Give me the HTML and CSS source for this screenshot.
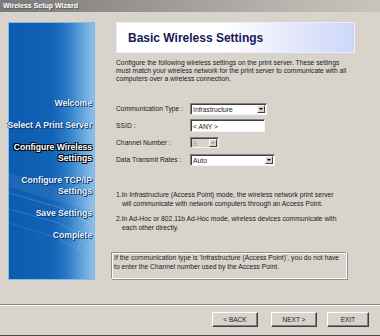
FILE: index.html
```html
<!DOCTYPE html>
<html lang="en">
<head>
    <meta charset="UTF-8">
    <title>Wireless Setup Wizard</title>
    <link rel="stylesheet" href="styles.css">
</head>
<body>
    <div class="window">
        <div class="titlebar">Wireless Setup Wizard</div>

        <div class="content">
            <aside class="steps">
                <svg class="steps-art" width="87" height="258" viewBox="0 0 87 258">
                    <polygon points="0,150 60,168 87,176 87,188 40,176 0,164" fill="#ffffff" fill-opacity="0.07"/>
                    <polyline points="0,170 55,186 80,200 70,212" fill="none" stroke="#ffffff" stroke-opacity="0.18"/>
                    <polyline points="0,186 50,200 75,214 68,226" fill="none" stroke="#ffffff" stroke-opacity="0.15"/>
                    <polyline points="0,200 46,214 72,228" fill="none" stroke="#ffffff" stroke-opacity="0.12"/>
                </svg>
                <ul class="step-list">
                    <li>Welcome</li>
                    <li>Select A Print Server</li>
                    <li class="current">Configure Wireless<br>Settings</li>
                    <li>Configure TCP/IP<br>Settings</li>
                    <li>Save Settings</li>
                    <li>Complete</li>
                </ul>
            </aside>

            <main class="page">
                <div class="page-head">
                    <h1>Basic Wireless Settings</h1>
                </div>

                <p class="intro">Configure the following wireless settings on the print server. These settings<br>must match your wireless network for the print server to communicate with all<br>computers over a wireless connection.</p>

                <div class="form">
                    <label>Communication Type :</label>
                    <div class="control combo comm"><span>Infrastructure</span><i class="arrow"></i></div>

                    <label>SSID :</label>
                    <div class="control text ssid"><span>&lt; ANY &gt;</span></div>

                    <label>Channel Number :</label>
                    <div class="control combo channel disabled"><span>9</span><i class="arrow"></i></div>

                    <label>Data Transmit Rates :</label>
                    <div class="control combo rate"><span>Auto</span><i class="arrow"></i></div>
                </div>

                <ol class="notes">
                    <li>1.In Infrastructure (Access Point) mode, the wireless network print server<br>will communicate with network computers through an Access Point.</li>
                    <li>2.In Ad-Hoc or 802.11b Ad-Hoc mode, wireless devices communicate with<br>each other directly.</li>
                </ol>

                <div class="hint">If the communication type is 'Infrastructure (Access Point)', you do not have<br>to enter the Channel number used by the Access Point.</div>
            </main>
        </div>

        <div class="footer">
            <button class="btn back">&lt; BACK</button>
            <button class="btn next">NEXT &gt;</button>
            <button class="btn exit">EXIT</button>
        </div>
    </div>
</body>
</html>
```

FILE: styles.css
```css
* {
    margin: 0;
    padding: 0;
    box-sizing: border-box;
}

body {
    font-family: 'Liberation Sans', Arial, sans-serif;
    background: #d8d4cc;
    color: #1a1a1a;
}

.window {
    width: 380px;
    height: 336px;
    background: #d8d4cc;
    border-bottom: 1px solid #4a4a4a;
    overflow: hidden;
}

.titlebar {
    height: 12px;
    padding-left: 3px;
    background: linear-gradient(to right, #7a7a7a 0%, #9a9896 40%, #bcb8b2 80%, #c8c4bc 100%);
    color: #ffffff;
    font-size: 7px;
    font-weight: bold;
    line-height: 12px;
    text-shadow: 1px 1px 0 #5a5a5a;
}

.content {
    display: flex;
    height: 292px;
    padding-top: 10px;
}

/* left step panel */
.steps {
    position: relative;
    width: 87px;
    height: 258px;
    margin-left: 8px;
    border: 1px solid #8ab8e0;
    background: linear-gradient(to right, #0b5bb0 0%, #1262b6 50%, #2a7ac6 68%, #5a9ed8 84%, #8cc2ea 100%);
}

.steps-art {
    position: absolute;
    left: 0;
    top: 0;
}

.step-list {
    position: relative;
    list-style: none;
    display: flex;
    flex-direction: column;
    align-items: flex-end;
    gap: 11px;
    padding-top: 75px;
    padding-right: 2px;
    text-align: right;
    white-space: nowrap;
    font-size: 8.6px;
    font-weight: bold;
    line-height: 11px;
    color: #eef4fc;
    text-shadow: 1px 1px 0 #07356a, -1px 0 0 #0b4a8c;
}

.step-list .current {
    color: #ffffff;
    text-shadow: 1px 1px 0 #000000, -1px -1px 0 #000000, 1px -1px 0 #000000, -1px 1px 0 #000000;
}

/* right page */
.page {
    width: 239px;
    margin-left: 21px;
    font-size: 6.75px;
}

.page-head {
    height: 31px;
    display: flex;
    align-items: center;
    padding-left: 11px;
    border: 1px solid #eceef8;
    background: linear-gradient(to right, #ffffff 0%, #ffffff 45%, #e4e8fc 75%, #ccd6fa 100%);
}

.page-head h1 {
    font-size: 12px;
    font-weight: bold;
    color: #16185a;
}

.intro {
    margin-top: 6px;
    line-height: 7.8px;
    white-space: nowrap;
}

.form {
    display: grid;
    grid-template-columns: 74px auto;
    grid-auto-rows: 13px;
    row-gap: 4px;
    align-items: center;
    justify-items: start;
    margin-top: 20px;
}

.control {
    display: flex;
    align-items: center;
    height: 12px;
    background: #ffffff;
    border: 1px solid;
    border-color: #808080 #f4f4f4 #f4f4f4 #808080;
    box-shadow: inset 1px 1px 0 #404040;
}

.control span {
    flex: 1;
    padding-left: 2px;
    padding-top: 1px;
}

.comm { width: 77px; }
.ssid { width: 75px; height: 13px; }
.channel { width: 29px; height: 11px; }
.rate { width: 85px; }

.disabled {
    background: #d8d4cc;
    color: #a09c98;
}

.arrow {
    position: relative;
    width: 8px;
    height: 8px;
    margin-right: 1px;
    background: #d8d4cc;
    border: 1px solid;
    border-color: #ffffff #404040 #404040 #ffffff;
}

.arrow::after {
    content: "";
    position: absolute;
    left: 1px;
    top: 2px;
    border-left: 2px solid transparent;
    border-right: 2px solid transparent;
    border-top: 2px solid #000000;
}

.disabled .arrow::after {
    border-top-color: #909090;
}

.notes {
    list-style: none;
    margin-top: 25px;
    line-height: 8.5px;
    white-space: nowrap;
}

.notes li {
    padding-left: 6px;
    text-indent: -6px;
}

.notes li + li {
    margin-top: 7px;
}

.hint {
    width: 236px;
    margin-top: 20px;
    margin-left: -5px;
    padding: 1px 2px 7px;
    line-height: 8.5px;
    white-space: nowrap;
    border: 1px solid;
    border-color: #909090 #ffffff #ffffff #909090;
    box-shadow: inset 1px 1px 0 #ffffff, 1px 1px 0 #909090;
}

/* buttons */
.footer {
    display: flex;
    justify-content: flex-end;
    height: 31px;
    padding: 7px 11px 0 0;
    border-top: 1px solid #8a8884;
    box-shadow: inset 0 1px 0 #ffffff;
}

.btn {
    height: 15px;
    background: #d8d4cc;
    border: 1px solid;
    border-color: #ffffff #404040 #404040 #ffffff;
    box-shadow: inset -1px -1px 0 #808080;
    font-family: 'Liberation Sans', Arial, sans-serif;
    font-size: 6.5px;
    color: #1a1a1a;
}

.back { width: 46px; margin-right: 13px; }
.next { width: 46px; margin-right: 10px; }
.exit { width: 42px; }
```
